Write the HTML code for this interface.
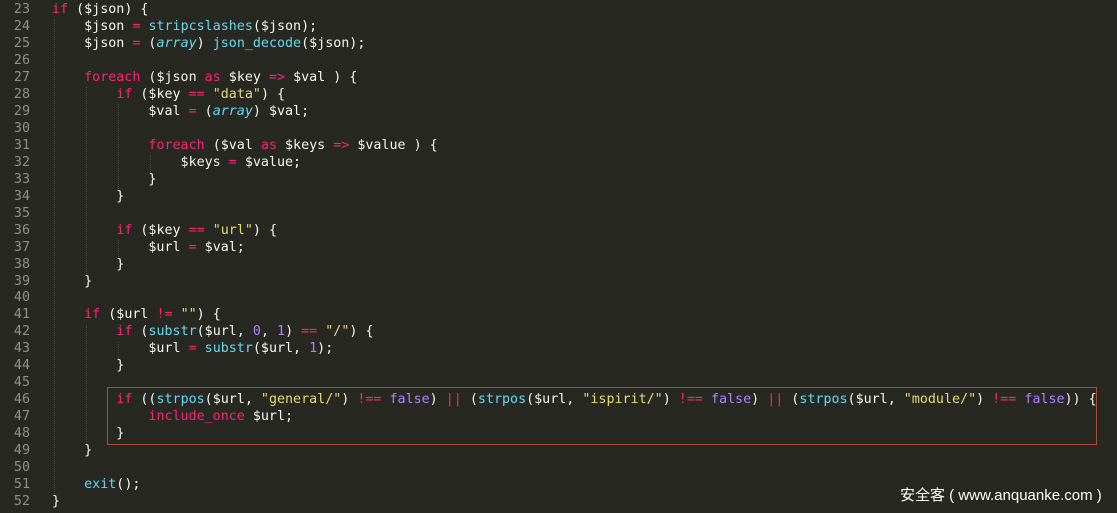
<!DOCTYPE html>
<html><head><meta charset="utf-8"><style>
body{margin:0;background:#272822;width:1117px;height:513px;overflow:hidden;position:relative}
pre{margin:0;position:absolute;top:2px;left:0;font-family:"DejaVu Sans Mono",monospace;font-size:13.35px;line-height:16.97px;color:#f8f8f2}
.n{display:inline-block;width:30px;text-align:right;color:#8f908a;margin-right:22px}
.k{color:#f92672}.f{color:#66d9ef}.s{color:#e6db74}.c{color:#ae81ff}.i{color:#66d9ef;font-style:italic}
.box{position:absolute;left:107px;top:387px;width:988px;height:56px;border:1px solid #b04a3c}
.wm{position:absolute;left:900px;top:484px;color:#fff;font:15px "Liberation Sans","Noto Sans CJK SC",sans-serif}
.g{position:absolute;width:0;border-left:1px dotted #4a4b44}
</style></head><body>
<div class="g" style="left:54px;top:19px;height:475px"></div>
<div class="g" style="left:86px;top:87px;height:187px"></div>
<div class="g" style="left:86px;top:325px;height:119px"></div>
<div class="g" style="left:118px;top:104px;height:85px"></div>
<div class="g" style="left:118px;top:240px;height:17px"></div>
<div class="g" style="left:118px;top:342px;height:17px"></div>
<div class="g" style="left:150px;top:155px;height:17px"></div>
<pre><span class="n">23</span><span class="k">if</span> ($json) {
<span class="n">24</span>    $json <span class="k">=</span> <span class="f">stripcslashes</span>($json);
<span class="n">25</span>    $json <span class="k">=</span> (<span class="i">array</span>) <span class="f">json_decode</span>($json);
<span class="n">26</span>
<span class="n">27</span>    <span class="k">foreach</span> ($json <span class="k">as</span> $key <span class="k">=&gt;</span> $val ) {
<span class="n">28</span>        <span class="k">if</span> ($key <span class="k">==</span> <span class="s">"data"</span>) {
<span class="n">29</span>            $val <span class="k">=</span> (<span class="i">array</span>) $val;
<span class="n">30</span>
<span class="n">31</span>            <span class="k">foreach</span> ($val <span class="k">as</span> $keys <span class="k">=&gt;</span> $value ) {
<span class="n">32</span>                $keys <span class="k">=</span> $value;
<span class="n">33</span>            }
<span class="n">34</span>        }
<span class="n">35</span>
<span class="n">36</span>        <span class="k">if</span> ($key <span class="k">==</span> <span class="s">"url"</span>) {
<span class="n">37</span>            $url <span class="k">=</span> $val;
<span class="n">38</span>        }
<span class="n">39</span>    }
<span class="n">40</span>
<span class="n">41</span>    <span class="k">if</span> ($url <span class="k">!=</span> <span class="s">""</span>) {
<span class="n">42</span>        <span class="k">if</span> (<span class="f">substr</span>($url, <span class="c">0</span>, <span class="c">1</span>) <span class="k">==</span> <span class="s">"/"</span>) {
<span class="n">43</span>            $url <span class="k">=</span> <span class="f">substr</span>($url, <span class="c">1</span>);
<span class="n">44</span>        }
<span class="n">45</span>
<span class="n">46</span>        <span class="k">if</span> ((<span class="f">strpos</span>($url, <span class="s">"general/"</span>) <span class="k">!==</span> <span class="c">false</span>) <span class="k">||</span> (<span class="f">strpos</span>($url, <span class="s">"ispirit/"</span>) <span class="k">!==</span> <span class="c">false</span>) <span class="k">||</span> (<span class="f">strpos</span>($url, <span class="s">"module/"</span>) <span class="k">!==</span> <span class="c">false</span>)) {
<span class="n">47</span>            <span class="k">include_once</span> $url;
<span class="n">48</span>        }
<span class="n">49</span>    }
<span class="n">50</span>
<span class="n">51</span>    <span class="f">exit</span>();
<span class="n">52</span>}</pre>
<div class="box"></div>
<div class="wm">安全客 ( www.anquanke.com )</div>
</body></html>
